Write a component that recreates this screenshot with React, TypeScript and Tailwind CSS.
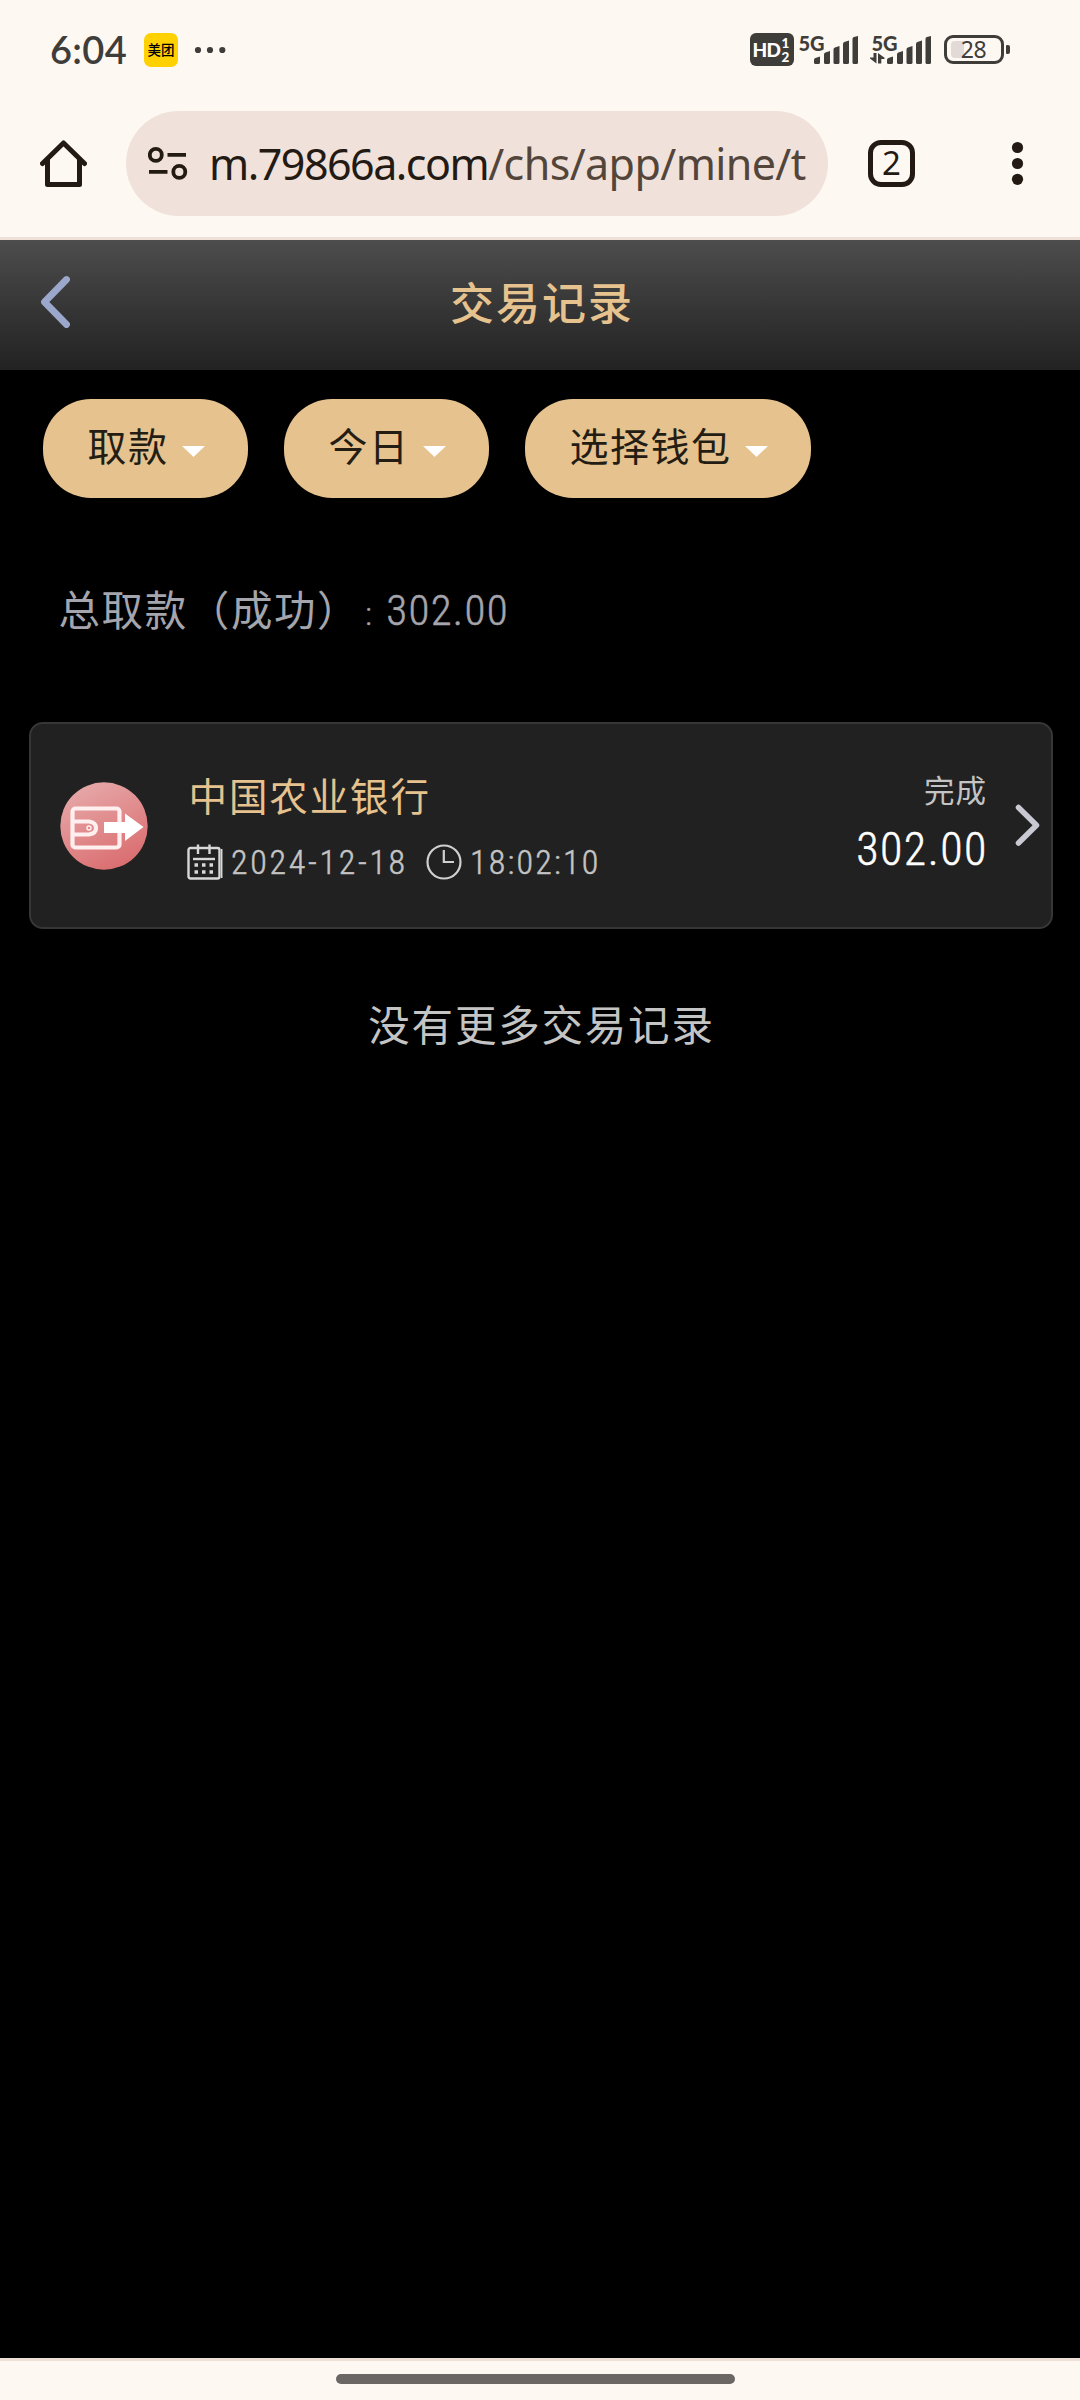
import clsx from 'clsx'

const cjk = "font-['Noto_Sans_CJK_SC',sans-serif]"
const digits =
  "font-['Roboto',sans-serif] font-stretch-85% font-light [-webkit-text-stroke:0.5px_currentColor]"

const filters = [
  { text: '取款', width: 'w-[205px]' },
  { text: '今日', width: 'w-[205px]' },
  { text: '选择钱包', width: 'w-[286px]' },
]

function Signal() {
  return (
    <svg width="45" height="28" viewBox="0 0 45 28" fill="#3f3d3a">
      <path d="M0 26.5V24Q0 22.6 1.4 22L6 20.4V26.5Q6 28 4.500 28H1.500Q0 28 0 26.500Z" />
      <path d="M10 26.500V18.500Q10 17 11.400 16.600L16 15V26.500Q16 28 14.500 28H11.500Q10 28 10 26.500Z" />
      <path d="M19.500 26.500V13.500Q19.500 12 20.900 11.500L25.500 10V26.500Q25.500 28 24 28H21Q19.500 28 19.500 26.500Z" />
      <path d="M29 26.500V8Q29 6.700 30.400 6.100L35 4.500V26.500Q35 28 33.500 28H30.500Q29 28 29 26.500Z" />
      <path d="M38.500 26.500V3Q38.500 1.600 39.900 1L44 0V26.500Q44 28 42.500 28H40Q38.500 28 38.500 26.500Z" />
    </svg>
  )
}

function StatusBar() {
  return (
    <div className="flex h-[100px] items-center pl-[50px] pr-[70px] text-[#3f3d3a]">
      <span className="w-[94px] pb-[2px] font-['Lato',sans-serif] text-[38px] font-semibold leading-none tracking-[0.3px]">
        6:04
      </span>
      <span
        className={clsx(
          cjk,
          'flex h-[34px] w-[34px] items-center justify-center rounded-[7px] bg-[#ffd100] pb-px text-[13.5px] font-medium leading-none text-black'
        )}
      >
        美团
      </span>
      <svg className="ml-[16px]" width="34" height="8" viewBox="0 0 34 8" fill="#3f3d3a">
        <circle cx="4" cy="4" r="3.100" />
        <circle cx="16" cy="4" r="3.100" />
        <circle cx="28.300" cy="4" r="3.100" />
      </svg>
      <div className="ml-auto flex h-[34px] items-start font-['Lato',sans-serif] font-black leading-none">
        <div className="flex h-[33px] w-[44px] items-center rounded-[6px] bg-[#3f3d3a] pl-[3px] text-white">
          <span className="w-[29px] text-[19px] tracking-[-0.8px]">HD</span>
          <span className="flex flex-col items-center text-[13.5px] leading-[14px]">
            <span>1</span>
            <span>2</span>
          </span>
        </div>
        <div className="relative ml-[5px] h-[34px] w-[60px]">
          <span className="text-[20px] tracking-[-0.2px]">5G</span>
          <div className="absolute left-[15px] top-[3px]">
            <Signal />
          </div>
        </div>
        <div className="relative ml-[13px] h-[34px] w-[60px]">
          <span className="text-[20px] tracking-[-0.2px]">5G</span>
          <svg className="absolute left-[-2px] top-[20px]" width="15" height="11" viewBox="0 0 15 11" fill="#3f3d3a">
            <path d="M3.500 0H6.500V10.500L0 5.500V4.500H3.500Z" />
            <path d="M8 0L14.500 4.800V6H11.300V10.500H8Z" />
          </svg>
          <div className="absolute left-[15px] top-[3px]">
            <Signal />
          </div>
        </div>
        <div className="ml-[12px] mt-[2px] flex items-center">
          <div className="relative flex h-[29px] w-[60px] items-center justify-center rounded-[9px] border-[3px] border-[#3f3d3a]">
            <div className="absolute left-[4px] top-[3px] h-[17px] w-[13px] rounded-l-[4px] bg-[#e2dad7]" />
            <span className="relative font-['Noto_Sans',sans-serif] text-[23px] font-normal tracking-[-0.3px]">28</span>
          </div>
          <div className="ml-[2.5px] h-[9px] w-[4px] rounded-r-[2px] rounded-l-[1px] bg-[#3f3d3a]" />
        </div>
      </div>
    </div>
  )
}

function AddressBar() {
  return (
    <div className="flex h-[140px] items-start border-b-[3px] border-[#efe1d7] pl-[40px] pt-[11px]">
      <svg className="mt-[29px]" width="47" height="47" viewBox="0 0 47 47" fill="none" stroke="#231a13" strokeWidth="5" strokeLinecap="round" strokeLinejoin="round">
        <path d="M2.500 23.500L23.500 3L44.500 23.500" />
        <path d="M7.500 20V44.500H39.500V20" />
      </svg>
      <div className="ml-[39px] flex h-[105px] w-[702px] items-center rounded-full bg-[#f0e2da] pl-[22px]">
        <svg width="40" height="34" viewBox="0 0 40 34" fill="none" stroke="#231a13">
          <circle cx="7.800" cy="7.900" r="6" strokeWidth="3.800" />
          <path d="M19.500 7.900H38M1 24.900H19.500" strokeWidth="3.800" />
          <circle cx="31.300" cy="24.900" r="6" strokeWidth="3.800" />
        </svg>
        <span className="ml-[21px] whitespace-nowrap font-['Noto_Sans',sans-serif] text-[43px] leading-none tracking-[-0.6px] text-[#54453b]">
          <span className="tracking-[-1.5px] text-[#231a13]">m.79866a.com</span>/chs/app/mine/t
        </span>
      </div>
      <div className="ml-[40px] mt-[29px] flex h-[47px] w-[47px] items-center justify-center rounded-[13px] border-[5px] border-[#231a13] pb-[2px] font-['Noto_Sans',sans-serif] text-[33px] leading-none text-[#231a13]">
        2
      </div>
      <svg className="ml-[96px] mt-[30px]" width="13" height="46" viewBox="0 0 13 46" fill="#231a13">
        <circle cx="6.500" cy="6.500" r="5.600" />
        <circle cx="6.500" cy="22.500" r="5.600" />
        <circle cx="6.500" cy="38.300" r="5.600" />
      </svg>
    </div>
  )
}

function Header() {
  return (
    <header className="flex h-[130px] items-center bg-linear-to-b from-[#4d4d4d] to-[#222222] pb-[6px] pl-[40px]">
      <svg width="30" height="54" viewBox="0 0 30 54" fill="none" stroke="#9ba7cb" strokeWidth="6.800" strokeLinecap="round" strokeLinejoin="round">
        <path d="M26.500 4.500L4.500 27L26.500 49.500" />
      </svg>
      <h1 className={clsx(cjk, 'ml-[380px] pb-[3px] text-[44px] font-medium leading-none tracking-[2px] text-[#e6c28e]')}>
        交易记录
      </h1>
    </header>
  )
}

function Record() {
  return (
    <div className="ml-[29px] mt-[62px] flex h-[207px] w-[1024px] rounded-[14px] border-2 border-[#363636] bg-[#212121]">
      <svg className="ml-[28.500px] mt-[57.500px]" width="88" height="88" viewBox="0 0 88 88">
        <defs>
          <linearGradient id="coin" x1="0.200" y1="0" x2="0.700" y2="1">
            <stop offset="0" stopColor="#e7aaaa" />
            <stop offset="1" stopColor="#da6c6f" />
          </linearGradient>
        </defs>
        <circle cx="44" cy="44" r="43.700" fill="url(#coin)" />
        <g fill="none" stroke="#fff0ef" strokeWidth="4.200">
          <rect x="12.500" y="26.500" width="47" height="39" rx="3" />
          <path d="M13 39.500H29Q36 40.500 36 46Q36 51.500 29 52.500H13" />
          <circle cx="29" cy="46" r="2" strokeWidth="1.500" />
        </g>
        <path d="M44 40H65V31.500L83.500 45L65 59V51H44Z" fill="#fff" />
      </svg>
      <div className="ml-[39.500px] flex flex-col">
        <div className={clsx(cjk, 'ml-[1.5px] mt-[49px] h-[42px] text-[38.5px] leading-[42px] tracking-[1.9px] text-[#e6c28e]')}>
          中国农业银行
        </div>
        <div className={clsx(digits, 'mt-[29px] flex h-[36px] items-center text-[34px] leading-none text-[#c4c4c4]')}>
          <svg width="36" height="36" viewBox="0 0 36 36" fill="none" stroke="#d8d8d8" strokeWidth="2.400">
            <rect x="1.500" y="4" width="31" height="30.500" rx="2" />
            <path d="M34.700 5V34" strokeWidth="1.500" />
            <path d="M11 0.500V10M22.500 0.500V10" />
            <path d="M6 15H28" />
            <path d="M7.500 21H11M15 21H18.500M22.500 21H26M7.500 28H11M15 28H18.500M22.500 28H26" strokeWidth="3.500" />
          </svg>
          <span className="ml-[8px] w-[183px] whitespace-nowrap tracking-[2.7px]">2024-12-18</span>
          <svg className="ml-[12px]" width="36" height="36" viewBox="0 0 36 36" fill="none" stroke="#d0d0d0" strokeWidth="2.200">
            <circle cx="18" cy="18" r="16.500" />
            <path d="M17.800 6V18H28" />
          </svg>
          <span className="ml-[8px] whitespace-nowrap tracking-[2.2px]">18:02:10</span>
        </div>
      </div>
      <div className="ml-auto flex flex-col items-end">
        <div className={clsx(cjk, 'mt-[48px] h-[34px] text-[30.500px] leading-[34px] tracking-[1px] text-[#c4c4c4]')}>
          完成
        </div>
        <div className={clsx(digits, 'mr-[-1px] mt-[17px] text-[46px] leading-[52px] tracking-[1.5px] text-white')}>
          302.00
        </div>
      </div>
      <svg className="ml-[28px] mr-[11px] mt-[80px]" width="25" height="43" viewBox="0 0 25 43" fill="none" stroke="#c9c9d4" strokeWidth="5.500" strokeLinecap="round" strokeLinejoin="round">
        <path d="M3.500 3.500L21.500 21.200L3.500 39" />
      </svg>
    </div>
  )
}

export default function App() {
  return (
    <div className="flex h-[2400px] w-[1080px] flex-col overflow-hidden bg-[#fef8f2]">
      <StatusBar />
      <AddressBar />
      <Header />
      <main className="flex-1 bg-black">
        <div className="flex gap-[36px] pl-[43px] pt-[29px]">
          {filters.map((filter) => (
            <button
              key={filter.text}
              className={clsx(
                cjk,
                filter.width,
                'flex h-[99px] items-center rounded-[48px] bg-[#e6c28e] pl-[44.5px] text-[39px] leading-none tracking-[1.5px] text-[#241d14]'
              )}
            >
              <span className="pb-[8px]">{filter.text}</span>
              <svg className="ml-[13px] mt-[5px]" width="23" height="11" viewBox="0 0 23 11" fill="#fff">
                <path d="M0 0H23L11.500 11Z" />
              </svg>
            </button>
          ))}
        </div>
        <div className="mt-[81px] flex h-[60px] items-center pl-[58.5px] text-[#a4a5ad]">
          <span className={clsx(cjk, 'pb-px text-[41.500px] leading-none tracking-[1.6px]')}>总取款（成功）</span>
          <span className={clsx(digits, 'ml-[5px] w-[21px] pt-[9px] text-[32px] leading-none')}>:</span>
          <span className={clsx(digits, 'pt-[2px] text-[43px] leading-none tracking-[1.3px]')}>302.00</span>
        </div>
        <div className="h-[21px]" />
        <Record />
        <p className={clsx(cjk, 'ml-[3px] mt-[64px] text-center text-[41.500px] leading-[60px] tracking-[1.8px] text-[#c4c4c4]')}>
          没有更多交易记录
        </p>
      </main>
      <footer className="flex h-[42px] items-start justify-center border-t-[3px] border-[#efe1d7] pr-[9px] pt-[13px]">
        <div className="h-[10px] w-[399px] rounded-full bg-[#6a6764]" />
      </footer>
    </div>
  )
}
